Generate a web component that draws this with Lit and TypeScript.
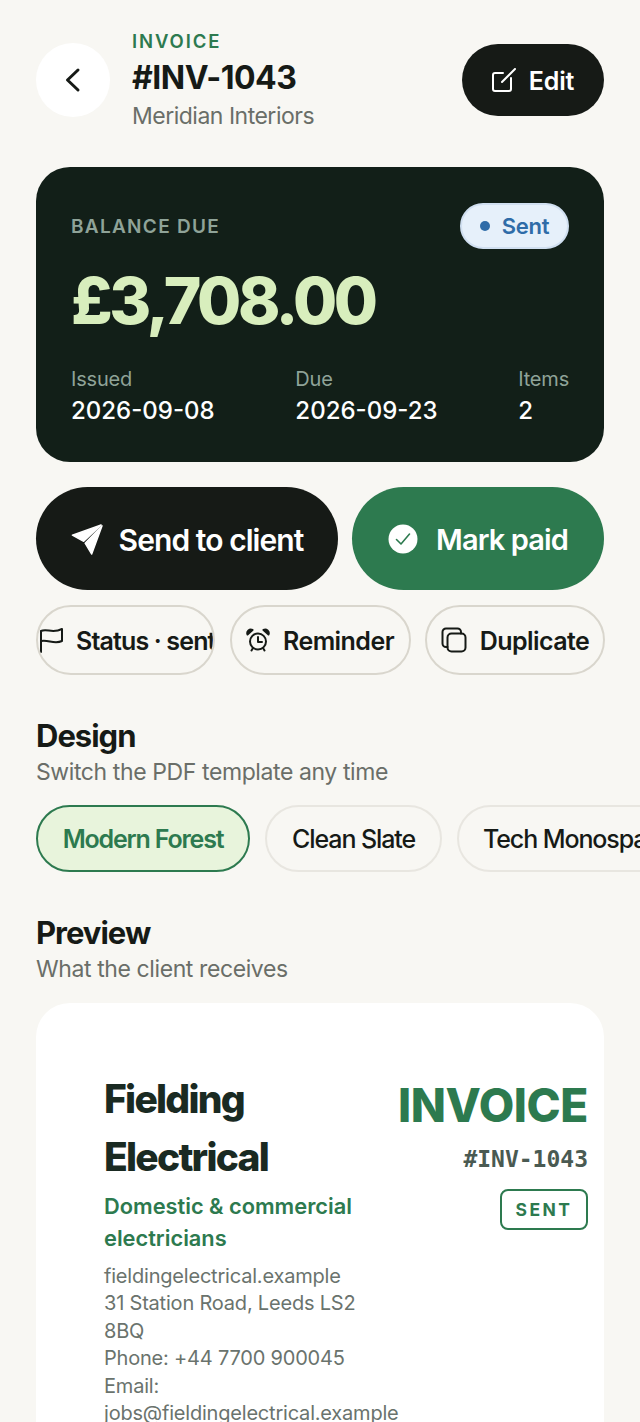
import { LitElement, html, css } from "lit";
import { customElement } from "lit/decorators.js";

@customElement("app-root")
export class AppRoot extends LitElement {
  static styles = css`
    :host { display: block; width: 640px; height: 1422px; overflow: hidden; background: #f8f7f3; font-family: "Inter", "Liberation Sans", sans-serif; color: #161a16; }
    .page { padding: 30px 36px 0; box-sizing: border-box; }
    svg { display: block; flex: none; }
    .head { display: flex; align-items: center; height: 100px; }
    .back { width: 74px; height: 74px; border-radius: 50%; background: #fff; display: flex; align-items: center; justify-content: center; flex: none; }
    .htext { margin-left: 22px; flex: 1; }
    .eyebrow { font-size: 18.5px; line-height: 22px; font-weight: 600; letter-spacing: 1.9px; color: #2d7a4f; }
    .num { font-size: 32px; line-height: 42px; font-weight: 700; letter-spacing: -0.5px; margin-top: 5px; }
    .client { font-size: 23px; line-height: 30px; color: #6a6e68; letter-spacing: -0.5px; margin-top: 2px; }
    .edit { width: 142px; height: 72px; border-radius: 36px; background: #161a16; color: #fff; display: flex; align-items: center; justify-content: center; gap: 13px; font-size: 25px; font-weight: 600; letter-spacing: -0.2px; }
    .edit span { padding-top: 2px; }

    .hero { margin-top: 37px; height: 295px; box-sizing: border-box; background: #121f18; border-radius: 34px; padding: 36px 35px 0 35px; }
    .hero-top { display: flex; justify-content: space-between; align-items: center; height: 46px; }
    .bal { font-size: 19px; font-weight: 600; letter-spacing: 1.3px; color: #8fa398; }
    .sent { width: 109px; height: 46px; box-sizing: border-box; border-radius: 23px; background: #e6f0fa; border: 2px solid #d0dff0; display: flex; align-items: center; justify-content: center; gap: 12px; font-size: 22px; font-weight: 600; letter-spacing: -0.3px; color: #2f6ca8; }
    .dot { width: 10px; height: 10px; border-radius: 50%; background: #2f6ca8; }
    .amount { font-size: 64px; line-height: 76px; font-weight: 800; letter-spacing: -3.4px; color: #d8eebd; margin-top: 14px; }
    .meta { display: flex; justify-content: space-between; margin-top: 26px; }
    .meta .l { font-size: 20px; line-height: 28px; color: #8fa398; letter-spacing: -0.2px; }
    .meta .v { font-size: 24px; line-height: 34px; font-weight: 500; color: #fff; letter-spacing: 0; margin-top: 1px; }

    .actions { display: flex; gap: 14px; margin-top: 25px; }
    .act { height: 103px; border-radius: 52px; color: #fff; display: flex; align-items: center; justify-content: center; font-weight: 600; }
    .act span { padding-top: 2px; }
    .act.send { width: 302px; background: #161a16; gap: 16px; font-size: 30px; letter-spacing: -0.93px; }
    .act.paid { width: 252px; background: #2d7a4f; gap: 18px; font-size: 29px; letter-spacing: -0.9px; }

    .chips { display: grid; grid-template-columns: 179px 181px 180px; gap: 14.5px; margin-top: 15px; }
    .chip { height: 70px; box-sizing: border-box; border: 2px solid #d9d6cd; border-radius: 35px; display: flex; align-items: center; justify-content: center; gap: 13px; overflow: hidden; white-space: nowrap; font-size: 25px; font-weight: 600; letter-spacing: -0.55px; }
    .chip span { padding-top: 2px; }
    .chip.first { justify-content: flex-start; letter-spacing: -0.85px; }

    h2 { margin: 0; font-size: 31px; line-height: 40px; font-weight: 700; letter-spacing: -1px; }
    .sub { font-size: 23px; line-height: 32px; color: #6a6e68; letter-spacing: -0.4px; }
    .design { margin-top: 41px; }
    .tpls { display: flex; gap: 15px; margin-top: 17px; width: 700px; }
    .tpl { height: 67px; box-sizing: border-box; border: 2px solid #e8e6e0; border-radius: 34px; display: flex; align-items: center; padding: 0 24px; white-space: nowrap; font-size: 25px; font-weight: 500; letter-spacing: -1.1px; flex: none; }
    .tpl.on { width: 214px; justify-content: center; padding: 0; background: #e8f4dc; border-color: #2d7a4f; color: #2d7a4f; font-weight: 600; letter-spacing: -1.2px; }
    .tpl.clean { width: 177px; justify-content: center; padding: 0; }
    .preview { margin-top: 41px; }

    .card { margin-top: 18px; background: #fff; border-radius: 34px 34px 0 0; height: 440px; box-sizing: border-box; padding: 67px 16px 0 68px; display: flex; justify-content: space-between; }
    .left { width: 294px; }
    .co { font-size: 39px; line-height: 58px; font-weight: 800; letter-spacing: -1.75px; color: #1a2a22; }
    .tag { font-size: 21.8px; line-height: 32px; font-weight: 600; color: #2d7a4f; margin-top: 4px; }
    .addr { font-size: 20px; line-height: 27.4px; color: #6a736d; margin-top: 9px; letter-spacing: -0.2px; }
    .right { display: flex; flex-direction: column; align-items: flex-end; }
    .inv { font-size: 46px; line-height: 56px; font-weight: 800; color: #2d7a4f; margin-top: 7px; letter-spacing: -0.4px; }
    .mono { font-family: "DejaVu Sans Mono", monospace; font-size: 23px; line-height: 32px; font-weight: 700; color: #4a5a52; margin-top: 10px; }
    .badge { margin-top: 14px; width: 88px; height: 41px; box-sizing: border-box; border: 2px solid #2d7a4f; border-radius: 8px; display: flex; align-items: center; justify-content: center; font-size: 17.5px; font-weight: 700; letter-spacing: 2.5px; color: #2d7a4f; }
  `;

  render() {
    return html`<div class="page">
      <div class="head">
        <div class="back">
          <svg width="28" height="28" viewBox="0 0 28 28" fill="none" stroke="#161a16" stroke-width="3" stroke-linecap="round" stroke-linejoin="round"><path d="M19 4 8.500 14 19 24"/></svg>
        </div>
        <div class="htext">
          <div class="eyebrow">INVOICE</div>
          <div class="num">#INV-1043</div>
          <div class="client">Meridian Interiors</div>
        </div>
        <div class="edit">
          <svg width="24" height="24" viewBox="0 0 24 24" fill="none" stroke="#fff" stroke-width="2" stroke-linecap="round" stroke-linejoin="round"><path d="M11 5H3a2 2 0 0 0-2 2v14a2 2 0 0 0 2 2h14a2 2 0 0 0 2-2V10"/><path d="M10 14 23 1"/></svg>
          <span>Edit</span>
        </div>
      </div>

      <div class="hero">
        <div class="hero-top">
          <div class="bal">BALANCE DUE</div>
          <div class="sent"><span class="dot"></span>Sent</div>
        </div>
        <div class="amount">£3,708.00</div>
        <div class="meta">
          <div><div class="l">Issued</div><div class="v">2026-09-08</div></div>
          <div><div class="l">Due</div><div class="v">2026-09-23</div></div>
          <div><div class="l">Items</div><div class="v">2</div></div>
        </div>
      </div>

      <div class="actions">
        <div class="act send">
          <svg width="32" height="32" viewBox="0 0 34 34" fill="#fff" stroke="#fff" stroke-width="1.5" stroke-linejoin="round"><path d="M32 2 1.500 13 13.500 19.500z"/><path d="M33 3 15 21.500 22 33z"/></svg>
          <span>Send to client</span>
        </div>
        <div class="act paid">
          <svg width="30" height="30" viewBox="0 0 30 30"><circle cx="15" cy="15" r="14.500" fill="#fff"/><path d="M8.500 15.500l4.500 4.500 8.500-10" fill="none" stroke="#2d7a4f" stroke-width="1.6" stroke-linecap="round" stroke-linejoin="round"/></svg>
          <span>Mark paid</span>
        </div>
      </div>

      <div class="chips">
        <div class="chip first">
          <svg width="25" height="26" viewBox="0 0 25 26" fill="none" stroke="#161a16" stroke-width="2" stroke-linecap="round" stroke-linejoin="round"><path d="M3 25V4c6-3 11 3 21-2v12c-8 4-14-2-21 0"/></svg>
          <span>Status · sent</span>
        </div>
        <div class="chip">
          <svg width="24" height="24" viewBox="0 0 24 24" fill="none" stroke="#161a16" stroke-width="2" stroke-linecap="round" stroke-linejoin="round"><circle cx="12" cy="13.500" r="8"/><path d="M12 9v5h4M5.500 22.500l1.500-2.500M18.500 22.500 17 20"/><path d="M1.500 6.500a3.600 3.600 0 0 1 5-4.500zM22.500 6.500a3.600 3.600 0 0 0-5-4.500z" fill="#161a16"/></svg>
          <span>Reminder</span>
        </div>
        <div class="chip">
          <svg width="26" height="26" viewBox="0 0 26 26" fill="none" stroke="#161a16" stroke-width="2" stroke-linecap="round" stroke-linejoin="round"><rect x="6.500" y="6.500" width="18" height="18" rx="4"/><path d="M6.500 20H5a3.500 3.500 0 0 1-3.500-3.500V5A3.500 3.500 0 0 1 5 1.500h11.500A3.500 3.500 0 0 1 20 5v1.500"/></svg>
          <span>Duplicate</span>
        </div>
      </div>

      <div class="design">
        <h2>Design</h2>
        <div class="sub">Switch the PDF template any time</div>
        <div class="tpls">
          <div class="tpl on">Modern Forest</div>
          <div class="tpl clean">Clean Slate</div>
          <div class="tpl">Tech Monospace</div>
        </div>
      </div>

      <div class="preview">
        <h2>Preview</h2>
        <div class="sub">What the client receives</div>
      </div>

      <div class="card">
        <div class="left">
          <div class="co">Fielding Electrical</div>
          <div class="tag">Domestic &amp; commercial electricians</div>
          <div class="addr">fieldingelectrical.example<br>31 Station Road, Leeds LS2 8BQ<br>Phone: +44 7700 900045<br>Email: jobs@fieldingelectrical.example</div>
        </div>
        <div class="right">
          <div class="inv">INVOICE</div>
          <div class="mono">#INV-1043</div>
          <div class="badge">SENT</div>
        </div>
      </div>
    </div>`;
  }
}
